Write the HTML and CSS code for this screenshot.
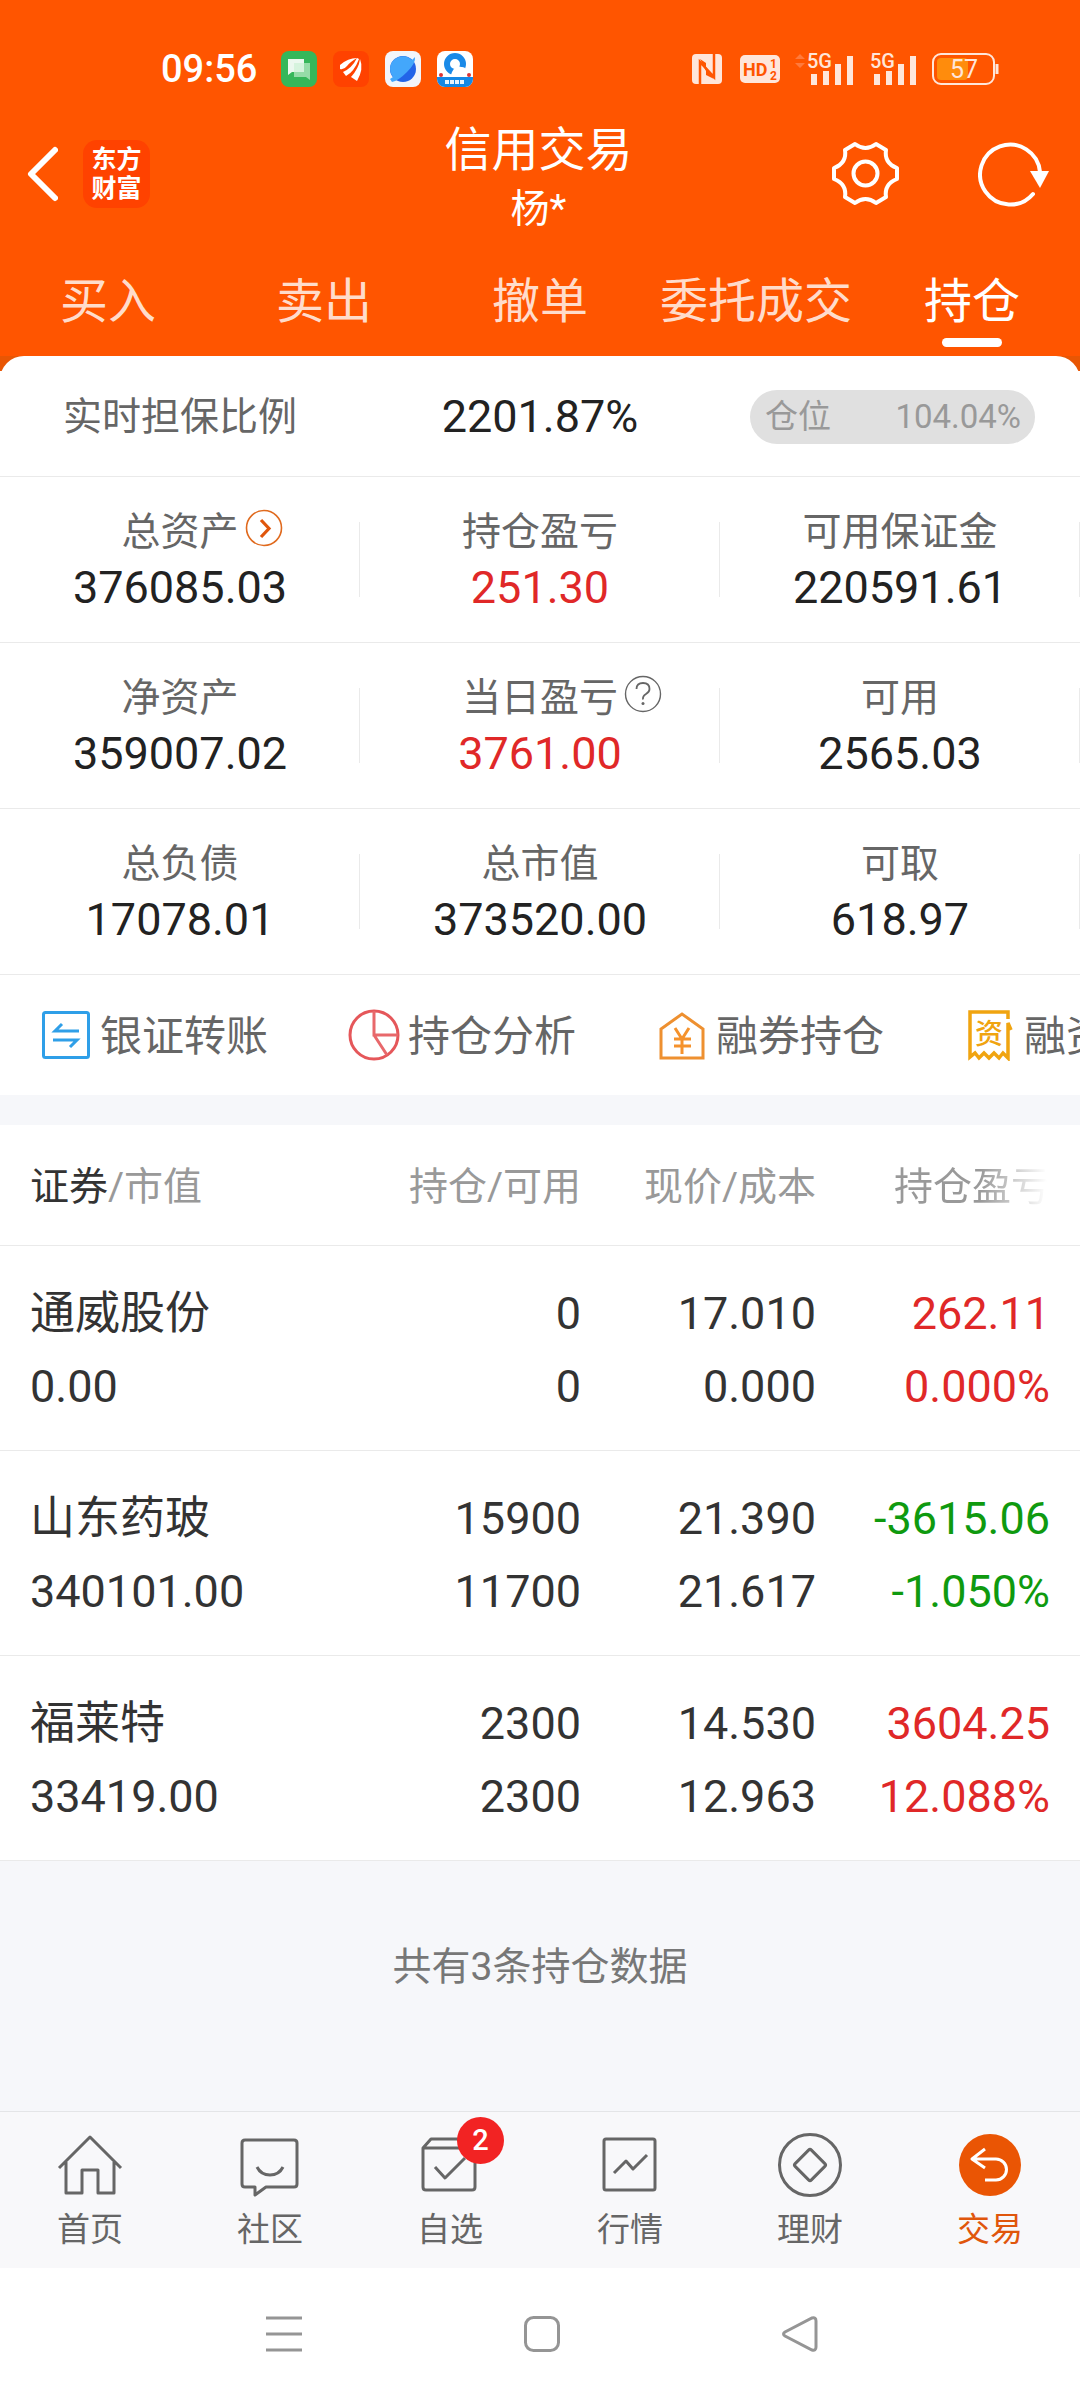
FILE: index.html
```html
<!DOCTYPE html>
<html lang="zh-CN">
<head>
<meta charset="utf-8">
<meta name="viewport" content="width=device-width, initial-scale=1">
<title>信用交易 - 持仓</title>
<link rel="stylesheet" href="styles.css">
</head>
<body>
<header class="header">
  <div class="status">
    <div class="status-group">
      <time class="clock">09:56</time>
      <svg class="app" viewBox="0 0 36 36"><rect width="36" height="36" rx="8" fill="#35b75a"/><path d="M7 8h16v13H11l-4 3z" fill="#fff" opacity=".9"/><path d="M13 12h16v17l-4-3H13z" fill="#c9f0d3" opacity=".65"/></svg>
      <svg class="app" viewBox="0 0 36 36"><rect width="36" height="36" rx="8" fill="#ff4200"/><path d="M7 14Q15 7 24 7Q17 11 14 15Q11 19 7 18zM10 21Q19 17 24 7L26 8Q21 21 13 25zM18 26Q26 17 27 8Q31 18 24 30z" fill="#fff"/></svg>
      <svg class="app" viewBox="0 0 36 36"><rect width="36" height="36" rx="8" fill="#f2f5fa"/><circle cx="18" cy="18" r="13" fill="#2264e8"/><path d="M5 18A13 13 0 0 1 27 9L30 6Q31 12 22 21T7 31L5 28L8 26Q5 22 5 18z" fill="#43a7fb"/></svg>
      <svg class="app" viewBox="0 0 36 36"><rect width="36" height="36" rx="8" fill="#fff"/><path d="M0 26H36V28A8 8 0 0 1 28 36H8A8 8 0 0 1 0 28z" fill="#1489e6"/><circle cx="18" cy="13" r="8" fill="none" stroke="#1a8ae8" stroke-width="6"/><path d="M15 21q4-8 9-5q6-1 6 8H14z" fill="#fff"/><circle cx="4" cy="24" r="2" fill="#d33"/><circle cx="32" cy="24" r="2" fill="#d33"/><path d="M8 29h4v4H8zM13 29h4v4h-4zM18 29h4v4h-4zM23 29h4v4h-4z" fill="#e4f4ff"/></svg>
    </div>
    <div class="status-group status-right">
      <svg width="30" height="30" viewBox="0 0 30 30"><rect width="30" height="30" rx="4" fill="#ffe6da"/><path d="M8 30V8L22 23V0" fill="none" stroke="#ff5500" stroke-width="2.500"/><path d="M8 5l6 4v8z M22 25l-8-4v-8z" fill="#ff5500"/></svg>
      <svg class="hd" width="40" height="28" viewBox="0 0 40 28"><rect width="40" height="28" rx="5" fill="#ffe6da"/><text x="3" y="21" class="hd-text">HD</text><text x="30" y="13" class="hd-num">1</text><text x="30" y="25" class="hd-num">2</text></svg>
      <svg width="62" height="44" viewBox="0 -5 62 44"><path d="M1 7l5-5 5 5zM1 11h10l-5 5z" fill="#ff7a3d"/><text x="13" y="16" class="net">5G</text><path d="M20 22V33M32 19V33M44 12V33M56 4V33" stroke="#ffe6da" stroke-width="6"/></svg>
      <svg width="48" height="44" viewBox="0 -5 48 44"><text x="0" y="16" class="net">5G</text><path d="M7 22V33M19 19V33M31 12V33M43 4V33" stroke="#ffe6da" stroke-width="6"/></svg>
      <svg class="battery" width="68" height="32" viewBox="0 0 68 32"><rect x="1" y="1" width="61" height="30" rx="8" fill="none" stroke="#ffe6da" stroke-width="2"/><rect x="5" y="5" width="31" height="22" rx="4" fill="#ff8c0c"/><path d="M65 11V21" stroke="#ffe6da" stroke-width="3"/><text x="18" y="25" class="level">57</text></svg>
    </div>
  </div>

  <div class="titlebar">
    <div class="title-left">
      <button class="plain" aria-label="返回"><svg width="31" height="56" viewBox="0 0 31 56"><path d="M28 4L4 28L28 52" fill="none" stroke="#fff" stroke-width="6" stroke-linecap="round" stroke-linejoin="round"/></svg></button>
      <a class="logo" href="#">东方<br>财富</a>
    </div>
    <div class="title"><h1>信用交易</h1><p>杨*</p></div>
    <div class="title-right">
      <button class="plain" aria-label="设置"><svg width="67" height="66" viewBox="0 0 67 66"><path d="M23 3Q33.500 11 44 3L54 9Q52 22 65 27V38Q52 43 54 56L44 62Q33.500 54 23 62L13 56Q15 43 2 38V27Q15 22 13 9Z" fill="none" stroke="#fff" stroke-width="4" stroke-linejoin="round"/><circle cx="33.500" cy="32.500" r="12" fill="none" stroke="#fff" stroke-width="4"/></svg></button>
      <button class="plain" aria-label="刷新"><svg width="72" height="72" viewBox="0 0 72 72"><path d="M55 56A30 30 0 1 1 62 34" fill="none" stroke="#fff" stroke-width="4" stroke-linecap="round"/><path d="M52 33H71L62 50z" fill="#fff"/></svg></button>
    </div>
  </div>

  <nav class="tabs">
    <a href="#">买入</a><a href="#">卖出</a><a href="#">撤单</a><a href="#">委托成交</a><a href="#" class="on">持仓</a>
  </nav>
</header>

<main>
  <section class="card">
    <div class="ratio">
      <span class="ratio-label">实时担保比例</span>
      <strong class="num">2201.87%</strong>
      <button class="pill"><span>仓位</span><span>104.04%</span></button>
    </div>
    <dl class="stats">
      <div><dt>总资产<button class="plain hint" aria-label="总资产详情"><svg width="38" height="38" viewBox="0 0 38 38"><circle cx="19" cy="19" r="17.500" fill="none" stroke="#e06a1e" stroke-width="1.600"/><path d="M16 11L24 19.500L16 28" fill="none" stroke="#e0560c" stroke-width="3.200"/></svg></button></dt><dd>376085.03</dd></div>
      <div><dt>持仓盈亏</dt><dd class="up">251.30</dd></div>
      <div><dt>可用保证金</dt><dd>220591.61</dd></div>
      <div><dt>净资产</dt><dd>359007.02</dd></div>
      <div><dt>当日盈亏<button class="plain hint" aria-label="当日盈亏说明"><svg width="38" height="38" viewBox="0 0 38 38"><circle cx="19" cy="19" r="17.500" fill="none" stroke="#666" stroke-width="1.400"/><path d="M12.500 14Q12.500 8 19 8T25.500 14Q25.500 17 22 19T19 24.500" fill="none" stroke="#666" stroke-width="1.800"/><circle cx="19" cy="28.500" r="1.500" fill="#666"/></svg></button></dt><dd class="up">3761.00</dd></div>
      <div><dt>可用</dt><dd>2565.03</dd></div>
      <div><dt>总负债</dt><dd>17078.01</dd></div>
      <div><dt>总市值</dt><dd>373520.00</dd></div>
      <div><dt>可取</dt><dd>618.97</dd></div>
    </dl>
    <nav class="shortcuts">
      <a href="#"><svg viewBox="0 0 52 52"><rect x="3.500" y="3.500" width="45" height="45" rx="2" fill="none" stroke="#2f9fe8" stroke-width="3"/><path d="M39 22H15L22 15M13 31H37L30 38" fill="none" stroke="#2f9fe8" stroke-width="3"/></svg><span>银证转账</span></a>
      <a href="#"><svg viewBox="0 0 52 52"><circle cx="26" cy="26" r="24" fill="none" stroke="#e5575a" stroke-width="3"/><path d="M26 2V26H50M26 26L39 46" fill="none" stroke="#e8686b" stroke-width="3"/></svg><span>持仓分析</span></a>
      <a href="#"><svg viewBox="0 0 52 52"><path d="M5 49V20L26 5L47 20V49Z" fill="none" stroke="#ee9030" stroke-width="3"/><path d="M19 19L26 30L33 19M18 30H35M18 37H35M26 30V45" fill="none" stroke="#f5922c" stroke-width="3"/></svg><span>融券持仓</span></a>
      <a href="#"><svg viewBox="0 0 52 52"><path d="M44 10V3H6V48L11 44L15 49L20 44L25 49L30 44L35 49L39 44L44 49V14L47 21" fill="none" stroke="#f0a410" stroke-width="3.500"/><text x="11" y="35" class="zi">资</text></svg><span>融资负债</span></a>
    </nav>
  </section>

  <table class="holdings">
    <colgroup><col><col class="c2"><col class="c2"><col class="c4"></colgroup>
    <thead><tr><th scope="col"><b>证券</b>/市值</th><th scope="col">持仓/可用</th><th scope="col">现价/成本</th><th scope="col"><span class="fade">持仓盈亏</span></th></tr></thead>
    <tbody>
      <tr><td><span>通威股份</span><span>0.00</span></td><td><span>0</span><span>0</span></td><td><span>17.010</span><span>0.000</span></td><td class="up"><span>262.11</span><span>0.000%</span></td></tr>
      <tr><td><span>山东药玻</span><span>340101.00</span></td><td><span>15900</span><span>11700</span></td><td><span>21.390</span><span>21.617</span></td><td class="down"><span>-3615.06</span><span>-1.050%</span></td></tr>
      <tr><td><span>福莱特</span><span>33419.00</span></td><td><span>2300</span><span>2300</span></td><td><span>14.530</span><span>12.963</span></td><td class="up"><span>3604.25</span><span>12.088%</span></td></tr>
    </tbody>
  </table>
  <p class="count">共有3条持仓数据</p>
</main>

<nav class="tabbar">
  <a href="#"><svg viewBox="0 0 72 72"><path d="M5 39L36 8L67 39M12 33V64H28V41H44V64H60V33"/></svg>首页</a>
  <a href="#"><svg viewBox="0 0 72 72"><path d="M11 11H60Q63 11 63 14V55Q63 58 60 58H32L21 66V58H11Q8 58 8 55V14Q8 11 11 11Z"/><path d="M23 38Q27 46 36 46T49 38"/></svg>社区</a>
  <a href="#"><svg viewBox="0 0 72 72"><path d="M9 19V58Q9 61 12 61H58Q61 61 61 58V19L53 10H17L9 19H61M21 38L31 49L51 29"/></svg><span class="badge">2</span>自选</a>
  <a href="#"><svg viewBox="0 0 72 72"><rect x="10" y="10" width="51" height="51" rx="2"/><path d="M20 44L32 32L39 40L53 26"/></svg>行情</a>
  <a href="#"><svg viewBox="0 0 72 72"><circle cx="36" cy="36" r="30.500"/><rect x="24.500" y="24.500" width="23" height="23" rx="2" transform="rotate(45 36 36)"/></svg>理财</a>
  <a href="#" class="on"><svg viewBox="0 0 72 72"><circle cx="36" cy="36" r="31" fill="#ea5504" stroke="none"/><path d="M31 20L18 30L31 39M18 30H42A10.500 10.500 0 0 1 42 51H31" stroke="#fff"/></svg>交易</a>
</nav>
<div class="sysnav">
  <button class="plain" aria-label="最近任务"><svg viewBox="0 0 36 36"><path d="M0 2H36M0 18H36M0 34H36"/></svg></button>
  <button class="plain" aria-label="主屏幕"><svg viewBox="0 0 36 36"><rect x="1.500" y="1.500" width="33" height="33" rx="8"/></svg></button>
  <button class="plain" aria-label="返回上一页"><svg viewBox="0 0 36 36"><path d="M30 2Q34 1 34 5V31Q34 35 30 34L3 20Q0 18 3 16Z"/></svg></button>
</div>
</body>
</html>
```
FILE: styles.css
```css
* { box-sizing: border-box; }

body {
  margin: 0;
  min-height: 100vh;
  display: flex;
  flex-direction: column;
  background: #f6f7fa;
  color: #333;
  font-family: Roboto, "Noto Sans CJK SC", sans-serif;
  font-size: 39px;
  line-height: 56px;
}

a { color: inherit; text-decoration: none; }
h1, p, dl, dd { margin: 0; }
svg { display: block; flex: none; }
button { font: inherit; color: inherit; border: 0; }
.plain { padding: 0; background: none; }

/* Header */
.header { background: #ff5500; color: #fff; }

.status {
  display: flex;
  justify-content: space-between;
  height: 104px;
  padding: 34px 80px 0 161px;
}
.status-group { display: flex; align-items: center; gap: 16px; }
.status-right { gap: 14px; }
.clock { font-size: 38px; font-weight: 500; margin-right: 8px; }
.app { width: 36px; height: 36px; }
.hd { margin-left: 4px; }
.hd-text { font: 700 18px Roboto, sans-serif; fill: #ff5500; }
.hd-num { font: 700 12px Roboto, sans-serif; fill: #ff5500; }
.net { font: 500 20px Roboto, sans-serif; fill: #ffe6da; }
.level { font: 400 25px Roboto, sans-serif; fill: #ffe6da; }

.titlebar {
  display: grid;
  grid-template-columns: 1fr auto 1fr;
  align-items: center;
  height: 140px;
  padding: 0 30px 0 27px;
}
.title-left { display: flex; align-items: center; gap: 25px; }
.logo {
  width: 67px;
  padding: 5px 0;
  border-radius: 14px;
  background: #ff4200;
  font-size: 25px;
  font-weight: 700;
  line-height: 29px;
  text-align: center;
}
.title { padding-top: 8px; text-align: center; }
.title h1 { font-size: 47px; font-weight: 400; line-height: 62px; }
.title p { font-size: 39px; line-height: 56px; }
.title-right { display: flex; align-items: center; justify-content: flex-end; gap: 79px; }

.tabs { display: grid; grid-template-columns: repeat(5, 1fr); }
.tabs a {
  position: relative;
  padding-top: 4px;
  font-size: 48px;
  line-height: 108px;
  text-align: center;
  color: #ffdccb;
}
.tabs .on { color: #fff; }
.tabs .on::after {
  content: "";
  position: absolute;
  left: 50%;
  bottom: 9px;
  width: 60px;
  height: 9px;
  margin-left: -30px;
  border-radius: 5px;
  background: #fff;
}

/* Account summary */
main { flex: 1; }
.card { background: linear-gradient(#e85604 15px, #fff 15px); }

.ratio {
  display: grid;
  grid-template-columns: repeat(3, 1fr);
  align-items: center;
  height: 121px;
  padding-top: 2px;
  border-bottom: 1px solid #eaeaea;
  border-radius: 24px 24px 0 0;
  background: #fff;
  text-align: center;
}
.ratio-label { color: #666; }
.num { font-size: 45px; font-weight: 400; color: #222; }
.pill {
  display: flex;
  justify-content: space-between;
  justify-self: end;
  width: 285px;
  margin-right: 45px;
  padding: 0 14px 0 15px;
  border-radius: 27px;
  background: #e0e0e0;
  color: #999;
  font-size: 33px;
  line-height: 54px;
}

.stats { display: grid; grid-template-columns: repeat(3, 1fr); background: #fff; }
.stats > div {
  height: 166px;
  padding-top: 27px;
  border-bottom: 1px solid #eaeaea;
  background: linear-gradient(#eaeaea, #eaeaea) right 45px / 1px 75px no-repeat;
  background-position: right 45px;
  text-align: center;
}
.stats dt { position: relative; width: fit-content; margin: 0 auto; color: #666; }
.stats dd { font-size: 45px; color: #222; }
.hint { position: absolute; left: 100%; top: 5px; margin-left: 6px; }

.up, .stats .up { color: #e02828; }
.down { color: #0f9a0f; }

.shortcuts {
  display: flex;
  height: 120px;
  overflow: hidden;
  background: #fff;
  color: #666;
  font-size: 42px;
}
.shortcuts a {
  display: flex;
  flex: none;
  align-items: center;
  gap: 8px;
  padding: 0 40px;
  white-space: nowrap;
}
.shortcuts svg { width: 52px; height: 52px; }
.shortcuts span { padding-top: 4px; }
.zi { font: 500 28px "Noto Sans CJK SC", sans-serif; fill: #f0a410; }

/* Holdings */
.holdings {
  width: 100%;
  margin-top: 30px;
  border-collapse: separate;
  border-spacing: 0;
  table-layout: fixed;
  background: #fff;
}
.c2 { width: 235px; }
.c4 { width: 264px; }
.holdings th, .holdings td { padding: 4px 0 0; text-align: right; border-bottom: 1px solid #eaeaea; }
.holdings th { height: 121px; font-weight: 400; color: #999; white-space: nowrap; }
.holdings th b { font-weight: 400; color: #333; }
.holdings td { height: 205px; font-size: 45px; line-height: 73px; }
.holdings td span { display: block; }
.holdings tr > :first-child { padding-left: 30px; text-align: left; }
.holdings tr > :last-child { padding-right: 30px; }
.fade {
  background: linear-gradient(to right, #999 55%, #fff 98%);
  background-clip: text;
  -webkit-background-clip: text;
  color: transparent;
}
.count { padding: 78px 0; text-align: center; color: #777; }

/* Bottom navigation */
.tabbar {
  display: grid;
  grid-template-columns: repeat(6, 1fr);
  border-top: 1px solid #e4e5e7;
  background: #f8f8fa;
  color: #666;
}
.tabbar a {
  position: relative;
  display: flex;
  flex-direction: column;
  align-items: center;
  gap: 9px;
  padding: 17px 0 18px;
  font-size: 33px;
  line-height: 40px;
}
.tabbar svg { width: 72px; height: 72px; fill: none; stroke: #666; stroke-width: 3; stroke-linejoin: round; }
.tabbar .on { color: #e0560c; }
.badge {
  position: absolute;
  left: 50%;
  top: 5px;
  width: 47px;
  margin-left: 7px;
  border-radius: 24px;
  background: #f22323;
  color: #fff;
  font-size: 29px;
  font-weight: 500;
  line-height: 47px;
  text-align: center;
}

.sysnav {
  display: flex;
  justify-content: center;
  align-items: center;
  gap: 222px;
  height: 132px;
  padding-left: 4px;
  background: #fff;
}
.sysnav svg { width: 36px; height: 36px; fill: none; stroke: #959595; stroke-width: 3; }
```
